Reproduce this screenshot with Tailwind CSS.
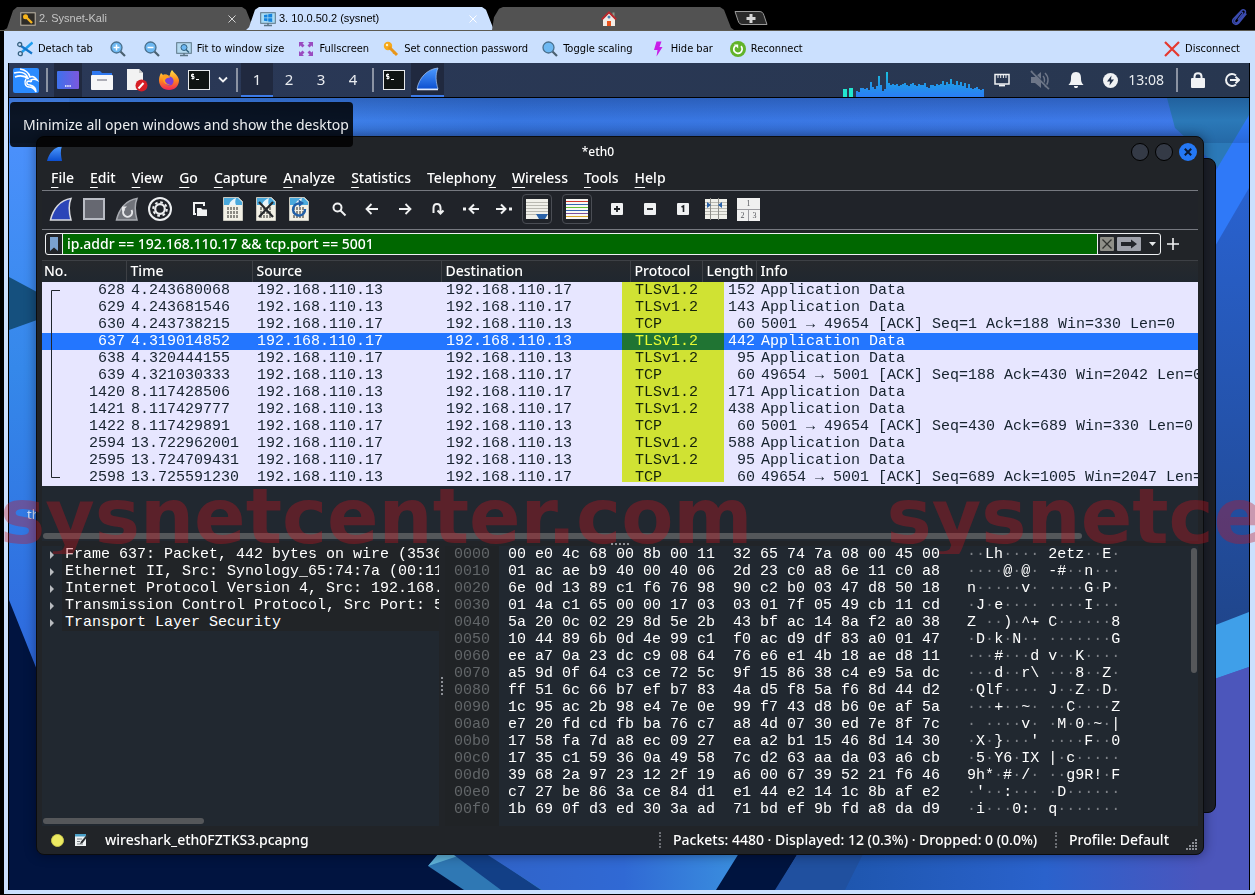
<!DOCTYPE html>
<html lang="en">
<head>
<meta charset="utf-8">
<meta name="viewport" content="width=device-width, initial-scale=1">
<title>3. 10.0.50.2 (sysnet)</title>
<script src="https://cdn.jsdelivr.net/npm/@tailwindcss/browser@4"></script>
</head>
<body class="relative h-screen overflow-hidden flex flex-col bg-black font-['Noto_Sans',sans-serif]">

<!-- shared symbols -->
<svg class="absolute size-0" aria-hidden="true">
  <defs>
    <linearGradient id="fin" x1="0" y1="0" x2="0" y2="1"><stop offset="0" stop-color="#4d9bff"/><stop offset="1" stop-color="#0c4fd0"/></linearGradient>
    <linearGradient id="wave" gradientUnits="userSpaceOnUse" x1="0" y1="8" x2="0" y2="34"><stop offset="0" stop-color="#18c5dc"/><stop offset=".5" stop-color="#2198e8"/><stop offset="1" stop-color="#2a7df5"/></linearGradient>
    <linearGradient id="fox" x1="0" y1="0" x2="0" y2="1"><stop offset="0" stop-color="#ffe04a"/><stop offset=".5" stop-color="#ff8a1c"/><stop offset="1" stop-color="#f0245a"/></linearGradient>
    <symbol id="terminal" viewBox="0 0 22 20"><rect x=".5" y=".5" width="21" height="19" fill="#101412" stroke="#e6e8ea"/><path d="M6 4.500H3.500v2H6v2H3.500M4.800 3.500v6M8 9.500h3" stroke="#fff" fill="none"/></symbol>
    <symbol id="page" viewBox="0 0 20 24"><path d="M.5.5h15l4 4v19H.5z" fill="#f3f1e6" stroke="#c9c8bf"/><path d="M1 1h14l4 4v3H1z" fill="#4aa9dc"/><path d="M6 8c1-4 4-6 7-7-1 3-1 5 0 7z" fill="#e8f4fa"/><path d="M4 11.500h12M4 15.500h12M4 19.500h12" stroke="#8c8b84" stroke-width="3" stroke-dasharray="2 1"/></symbol>
    <symbol id="lens" viewBox="0 0 16 16"><path d="M10.500 10.500l4.500 4.500" stroke="#4b6070" stroke-width="2.200"/><circle cx="6.500" cy="6.500" r="5.500" fill="#6db8f2" stroke="#4a6f8c" stroke-width="1.300"/></symbol>
  </defs>
</svg>

<!-- session tabs -->
<header class="h-[31px] shrink-0 flex items-end pl-1 border-b border-[#5c5a52] font-['Liberation_Sans',sans-serif] text-[11px]">
  <nav class="flex items-end flex-1" aria-label="Sessions">
    <button class="w-[250px] h-[23px] pl-4 pr-[18px] flex items-center bg-[#525252] text-[#c4c4c4] [clip-path:polygon(0_100%,3px_92%,9px_15%,13px_0,calc(100%_-_12px)_0,calc(100%_-_8px)_12%,100%_100%)]">
      <svg class="size-4" viewBox="0 0 16 16"><rect x=".8" y="1.800" width="14.400" height="12.400" fill="#2e2c28" stroke="#c0b8a8"/><circle cx="5.500" cy="5.800" r="2.500" fill="#f7b51c"/><path d="M6 6l6 6" stroke="#f7b51c" stroke-width="2.400"/></svg>
      <span class="ml-[3px]">2. Sysnet-Kali</span>
      <svg class="ml-auto size-2" viewBox="0 0 8 8"><path d="M.5.5l7 7m0-7l-7 7" stroke="#d5d5d5"/></svg>
    </button>
    <button class="-ml-2 w-[250px] h-[23px] pl-[14px] pr-[19px] flex items-center bg-[#cbe0fe] text-black [clip-path:polygon(0_100%,3px_88%,9px_12%,13px_0,calc(100%_-_14px)_0,calc(100%_-_10px)_12%,calc(100%_-_3px)_90%,100%_100%)]">
      <svg class="size-4" viewBox="0 0 16 16"><rect x=".7" y="1.700" width="14.600" height="10.600" fill="#a8dcf5" stroke="#5c7686"/><path d="M4 4l3.500-.6v3.100H4zM8.200 3.300l4-.6v3.800h-4zM4 7.200h3.500v3L4 9.700zM8.200 7.200h4V11l-4-.6z" fill="#1583dd"/><path d="M8 12v2M4 14.500h8" stroke="#5c7686" stroke-width="1.500"/></svg>
      <span class="ml-[3px]">3. 10.0.50.2 (sysnet)</span>
      <svg class="ml-auto size-2" viewBox="0 0 8 8"><path d="M.5.5l7 7m0-7l-7 7" stroke="#fff"/></svg>
    </button>
    <button aria-label="Home" class="-ml-1 w-[242px] h-[23px] pr-2 flex items-center justify-center bg-[#525252] [clip-path:polygon(0_100%,2px_45%,7px_8%,11px_0,calc(100%_-_14px)_0,calc(100%_-_10px)_12%,calc(100%_-_3px)_90%,100%_100%)]">
      <svg class="size-4" viewBox="0 0 16 16"><path d="M2 8h12v7H2z" fill="#f1ece6"/><path d="M11.500 1.500h2V6h-2z" fill="#8d9a8a"/><path d="M8 2L14 8v1H2V8z" fill="#f1ece6"/><path d="M.8 8.500L8 1.300l7.200 7.200" stroke="#b8292d" stroke-width="1.800" fill="none"/><circle cx="8" cy="6" r="1.500" fill="#4a86b4"/><path d="M6 10h4v5H6z" fill="#e8521c"/></svg>
    </button>
    <button aria-label="New tab" class="mb-1 w-[34px] h-4">
      <svg class="w-[34px] h-4" viewBox="0 0 34 16"><path d="M1 1.500h24c3 0 4 1 5 4l3 9H9c-3 0-4-1-5-4z" fill="#2b2b2b" stroke="#9b9b9b"/><path d="M17 4v9M12.500 8.500h9" stroke="#d8d8d8" stroke-width="3"/></svg>
    </button>
  </nav>
  <svg class="w-[18px] h-[18px] mr-[7px] mb-1" viewBox="0 0 16 16" fill="none" stroke="#3b4bb0" stroke-width="1.300"><path d="M13.500 4.500L7 12.500c-1.500 1.800-4-.2-2.600-2L9.500 4c.9-1 2.300 0 1.500 1.200L7 10.300M13.500 4.500c1-2-1.500-4-3.300-2.300L3 9.800c-2 3 1.600 6.500 4.600 3.700l7-8.500"/></svg>
</header>

<main class="flex-1 min-h-0 flex flex-col mb-px ml-1 bg-[#cbe0fe] rounded-br">
  <!-- session toolbar -->
  <div class="h-8 pt-1 shrink-0 flex items-center pl-[13px] pr-[15px] text-black text-[11px] font-['DejaVu_Sans_Condensed','DejaVu_Sans',sans-serif] font-stretch-condensed whitespace-nowrap">
    <button class="flex items-center gap-[5px]"><svg class="size-4" viewBox="0 0 16 16" fill="none"><path d="M15.500 1.500L5 11" stroke="#1f9ff0" stroke-width="2.400"/><path d="M4 5l11 7.500" stroke="#1675c9" stroke-width="2.200"/><circle cx="2.700" cy="3.500" r="2" stroke="#35607f" stroke-width="1.300"/><circle cx="3.300" cy="12.700" r="2" stroke="#35607f" stroke-width="1.300"/></svg>Detach tab</button>
    <button aria-label="Zoom in" class="ml-[17px]"><svg class="size-4" viewBox="0 0 16 16"><use href="#lens"/><path d="M6.500 3.500v6m-3-3h6" stroke="#fff" stroke-width="1.500"/></svg></button>
    <button aria-label="Zoom out" class="ml-[18px]"><svg class="size-4" viewBox="0 0 16 16"><use href="#lens"/><path d="M3.500 6.500h6" stroke="#fff" stroke-width="1.500"/></svg></button>
    <button class="ml-4 flex items-center gap-[5px]"><svg class="size-4" viewBox="0 0 16 16"><rect x=".7" y="1.700" width="14.600" height="10.600" fill="#b5daf0" stroke="#5c7686"/><path d="M4 14.500h8M8 12v2" stroke="#5c7686" stroke-width="1.500"/><circle cx="8" cy="6.500" r="3" fill="#6db8f2" stroke="#33617f"/><path d="M10 8.500l3 3" stroke="#33617f" stroke-width="1.500"/></svg>Fit to window size</button>
    <button class="ml-[14px] flex items-center gap-[5px]"><svg class="size-4" viewBox="0 0 16 16" fill="#9a4cc0"><path d="M1 1h5L4.500 2.500l2 2-2 2-2-2L1 6zM15 1v5l-1.500-1.500-2 2-2-2 2-2L10 1zM1 15v-5l1.500 1.500 2-2 2 2-2 2L6 15zM15 15h-5l1.500-1.500-2-2 2-2 2 2L15 10z"/></svg>Fullscreen</button>
    <button class="ml-[14px] flex items-center gap-[5px]"><svg class="size-4" viewBox="0 0 16 16"><circle cx="5" cy="5" r="4.200" fill="#f6a91b"/><circle cx="4" cy="4" r="1.200" fill="#fff0c8"/><path d="M6 6l8 8" stroke="#e8961a" stroke-width="3"/><path d="M10 12.500l2-2" stroke="#e8961a" stroke-width="1.500"/></svg>Set connection password</button>
    <button class="ml-[14px] flex items-center gap-[5px]"><svg class="size-4" viewBox="0 0 16 16"><use href="#lens"/></svg>Toggle scaling</button>
    <button class="ml-[17px] flex items-center gap-[5px]"><svg class="size-4" viewBox="0 0 16 16"><path d="M6.500.5h5L9.500 6h3l-6 9.500L7.500 9H4z" fill="#c81ee8"/></svg>Hide bar</button>
    <button class="ml-[17px] flex items-center gap-[5px]"><svg class="size-4" viewBox="0 0 16 16"><circle cx="8" cy="8" r="8" fill="#62b32a"/><path d="M11 5.200a4.200 4.200 0 1 1-5.500-.5" stroke="#fff" stroke-width="1.700" fill="none"/><path d="M4 3.500h4.200v4z" fill="#fff"/></svg>Reconnect</button>
    <button class="ml-auto flex items-center gap-[5px]"><svg class="size-4" viewBox="0 0 16 16"><path d="M1 1l14 14M15 1L1 15" stroke="#e5392f" stroke-width="2.200"/></svg>Disconnect</button>
  </div>

  <!-- remote desktop -->
  <section aria-label="Remote desktop" class="relative flex-1 min-h-0 ml-1 mr-[5px] mb-1 border-x border-black overflow-hidden bg-[#2a62cf]">
    <svg class="absolute inset-0 size-full" viewBox="9 63 1240 827" preserveAspectRatio="none" aria-hidden="true">
      <defs>
        <linearGradient id="leftsky" x1="0" y1="0" x2="0" y2="1"><stop offset="0" stop-color="#4f92ff"/><stop offset=".45" stop-color="#3588ea"/><stop offset="1" stop-color="#2d66dc"/></linearGradient>
        <linearGradient id="topsky" x1="0" y1="0" x2="1" y2="0"><stop offset="0" stop-color="#4a90f8"/><stop offset=".4" stop-color="#3776e0"/><stop offset="1" stop-color="#3f7aea"/></linearGradient>
        <linearGradient id="rightlow" x1="0" y1="0" x2="0" y2="1"><stop offset="0" stop-color="#2962d0"/><stop offset="1" stop-color="#1f4488"/></linearGradient>
        <linearGradient id="bottomblue" x1="0" y1="0" x2="1" y2="0"><stop offset="0" stop-color="#3063c8"/><stop offset=".55" stop-color="#3069d4"/><stop offset="1" stop-color="#3a8fdf"/></linearGradient>
        <linearGradient id="bottomright" x1="0" y1="0" x2="1" y2="0"><stop offset="0" stop-color="#1e56ae"/><stop offset=".5" stop-color="#2a62cc"/><stop offset=".9" stop-color="#4c55bd"/><stop offset="1" stop-color="#4c55bd"/></linearGradient>
        <linearGradient id="panelshade" x1="0" y1="0" x2="0" y2="1"><stop offset="0" stop-color="#0b2860" stop-opacity=".3"/><stop offset=".5" stop-color="#0b2860" stop-opacity="0"/><stop offset="1" stop-color="#0b2860" stop-opacity=".2"/></linearGradient>
      </defs>
      <path d="M9 63h1240v80H9z" fill="url(#topsky)"/>
      <path d="M9 98h60v600H9z" fill="url(#leftsky)"/>
      <path d="M9 277l28 15v28l-28 10z" fill="#15507e"/>
      <path d="M9 600l28 70v-10h600v230H9z" fill="#011440"/>
      <path d="M1167 98h82v20l-30 50-44-40z" fill="#2b79b8"/>
      <path d="M1249 115l-49 82v60h49z" fill="#2f79f8"/>
      <path d="M1249 188l-49 84v380h49z" fill="url(#rightlow)"/>
      <path d="M840 889l20-50h356V677l33-10v223H840z" fill="url(#bottomright)"/>
      <path d="M1200 631l49-19v55l-49 17z" fill="#3f9fe9"/>
      <path d="M1249 667l-49 17v206h49z" fill="#4c56bb"/>
      <path d="M428 866l12-14h60l46 38h-82z" fill="#2f78b4"/>
      <path d="M428 866l12-14h30z" fill="#5fb2d8"/>
      <path d="M450 852h35l56 38h-40z" fill="#123f86"/>
      <path d="M480 850l62 40h175l24-40z" fill="url(#bottomblue)"/>
      <path d="M741 850l-25 40h60l24-40z" fill="#00143f"/>
      <path d="M800 850l-25 40h70l20-40z" fill="#20509f"/>
      <path d="M9 98h1240v45H9z" fill="url(#panelshade)"/>
    </svg>
    <span class="absolute left-[18px] top-[442px] text-[13px] text-white/80">th</span>

    <!-- desktop panel -->
    <div class="relative h-[35px] flex items-center bg-gradient-to-r from-[#2a3857] to-[#283750] border-b border-black text-[#e9ecf0]">
      <button aria-label="Applications" class="w-[34px] h-full flex items-center justify-center"><svg class="size-7" viewBox="0 0 28 28"><rect x="1" y="2" width="26" height="25" rx="2" fill="#2a8bff"/><path d="M2 7c7-2 12 0 14 5-5-3-9-3-13-1 6-2 10-1 13 2M8 3c6 1 9 4 10 8 2-1 5 0 7 3-2-1-4-1-6 0 1 2 0 2-2 1-3 0-3 4 1 4 4 1 6 3 6 7-2-4-4-5-7-5-4 0-5-5-3-8" fill="none" stroke="#fff" stroke-width="1.500"/></svg></button>
      <i class="ml-[3px] w-0.5 h-6 bg-[#8b93a3]"></i>
      <button aria-label="Show desktop" class="ml-1.5 w-7 h-full flex items-center justify-center bg-[#20293f]"><svg class="w-[22px] h-[18px]" viewBox="0 0 22 18"><defs><linearGradient id="dk"><stop offset="0" stop-color="#3d71ec"/><stop offset="1" stop-color="#7c58dd"/></linearGradient></defs><rect width="22" height="18" rx="1" fill="url(#dk)"/><path d="M8 15h6" stroke="#fff" stroke-width="1.500" stroke-dasharray="1.500 .7"/></svg></button>
      <button aria-label="Files" class="ml-2 w-6 h-full flex items-center"><svg class="w-6 h-5" viewBox="0 0 24 20"><path d="M2 1h8l2 2h10v6H2z" fill="#2f78f0"/><rect x="1" y="5" width="22" height="15" rx="1" fill="#f6f6f8"/><path d="M7 10h10" stroke="#9b9ba6" stroke-width="1.600"/></svg></button>
      <button aria-label="Text editor" class="ml-3 w-[22px] h-full flex items-center"><svg class="w-[22px] h-6" viewBox="0 0 22 24"><path d="M1 1h12l4 4v17H1z" fill="#f2f2f2"/><path d="M13 1v4h4z" fill="#c9c9c9"/><circle cx="15.500" cy="17.500" r="6" fill="#d61f26"/><path d="M12.500 20.500l5-5.500" stroke="#fff" stroke-width="2"/></svg></button>
      <button aria-label="Firefox" class="ml-2.5 w-[22px] h-full flex items-center"><svg class="w-[22px] h-[22px]" viewBox="0 0 22 22"><path d="M14 1c2 3 6 5 7 10 0 6-4 10-10 10S1 17 1 11c0-3 1-5 2-7l2 2c3-1 5 0 6 1l1-1c0-2 1-4 2-5z" fill="url(#fox)"/><circle cx="11" cy="12" r="4.600" fill="#7a3fd4"/><path d="M5 6c3-1 6 0 7 3-3-1-4 1-5 2 0 3 3 5 6 4-5 3-10-3-8-9z" fill="#ff9f1e"/></svg></button>
      <button aria-label="Terminal" class="ml-2 w-[22px] h-full flex items-center"><svg class="w-[22px] h-5"><use href="#terminal"/></svg></button>
      <button aria-label="More terminals" class="ml-[7px] w-3 h-full flex items-center justify-center"><svg class="w-2.5 h-2" viewBox="0 0 10 8" fill="none" stroke="#f0f2f4" stroke-width="1.800"><path d="M1 1.500l4 4 4-4"/></svg></button>
      <i class="ml-[7px] w-0.5 h-6 bg-[#8b93a3]"></i>
      <div class="ml-[3px] flex h-full text-[15px]">
        <button class="w-8 border-b-2 border-[#3d7be8] bg-[#20293f]">1</button><button class="w-8 border-b-2 border-transparent">2</button><button class="w-8 border-b-2 border-transparent">3</button><button class="w-8 border-b-2 border-transparent">4</button>
      </div>
      <i class="ml-[3px] w-0.5 h-6 bg-[#8b93a3]"></i>
      <button aria-label="Terminal window" class="ml-[9px] w-[22px] h-full flex items-center"><svg class="w-[22px] h-5"><use href="#terminal"/></svg></button>
      <button aria-label="Wireshark window" class="ml-[6px] w-[33px] h-full flex items-center justify-center border-b-2 border-[#3d7be8] bg-[#20293f]"><svg class="size-6" viewBox="0 0 24 24"><path d="M1 22C3 11 11 2 22 1c-3 7-2 14 0 21z" fill="url(#fin)" stroke="#a9c8f5" stroke-width=".7"/><path d="M1 22.500h21" stroke="#dfeaff" stroke-width="1.500"/></svg></button>
      <div class="ml-auto h-full flex items-end"><i class="w-1 h-2 bg-[#22e6cf]"></i><i class="ml-0.5 w-1 h-[9px] bg-[#22e6cf]"></i><svg id="load" class="ml-[3px] w-32 h-[34px]" viewBox="0 0 128 34"></svg></div>
      <svg class="ml-[10px] size-4" viewBox="0 0 16 16" fill="none" stroke="#f0f2f4" stroke-width="1.500"><rect x="1" y="2.500" width="14" height="9.500"/><path d="M4 3v3m2.700-3v3m2.700-3v3M12 3v3" stroke-width="1"/><path d="M5 13.500h6" stroke-width="1.800"/></svg>
      <svg class="ml-5 size-5" viewBox="0 0 20 20" fill="#6d7688"><path d="M1 7h4l6-5v16l-6-5H1z"/><path d="M13 6c2 2 2 6 0 8m2-11c4 4 4 10 0 14" stroke="#6d7688" stroke-width="1.500" fill="none"/><path d="M1 1l18 18" stroke="#6d7688" stroke-width="2"/><path d="M3 1.500l17 17" stroke="#29384f" stroke-width="1"/></svg>
      <svg class="ml-[18px] size-4" viewBox="0 0 16 16" fill="#f0f2f4"><path d="M8 0c4 0 5 3 5 6 0 4 1 5 2.500 7H.5C2 11 3 10 3 6c0-3 1-6 5-6zM6 14h4c0 3-4 3-4 0z"/></svg>
      <svg class="ml-[19px] size-[15px]" viewBox="0 0 15 15"><circle cx="7.500" cy="7.500" r="7.500" fill="#f0f2f4"/><path d="M8.500 2.500L4 8.500h3L6.500 12.500 11 6.500H8z" fill="#26344d"/></svg>
      <time class="ml-[10px] text-sm">13:08</time>
      <i class="ml-3 w-0.5 h-6 bg-[#8b93a3]"></i>
      <svg class="ml-[13px] w-3.5 h-4" viewBox="0 0 14 16"><rect y="6" width="14" height="10" rx="1" fill="#f0f2f4"/><path d="M3.500 6.500V4.500c0-4.500 7-4.500 7 0v2" fill="none" stroke="#f0f2f4" stroke-width="2"/></svg>
      <svg class="ml-[19px] mr-[9px] size-4" viewBox="0 0 16 16" fill="none" stroke="#f0f2f4" stroke-width="2"><path d="M12 3.500A6 6 0 1 0 12 12.500M6 8h8M11.500 4.800L15 8l-3.500 3.200"/></svg>
    </div>

    <!-- window in the background -->
    <div class="absolute left-[60px] right-[33px] top-[95px] bottom-[77px] rounded-lg border border-[#07080a] bg-[#1d2027]"></div>

    <!-- Wireshark -->
    <article aria-label="*eth0" class="absolute left-[27px] right-[45px] top-[73px] bottom-[35px] rounded-lg border border-[#0b0c0e] bg-[#212428] shadow-[0_0_12px_rgba(0,0,20,0.45)] flex flex-col px-[5px] text-white text-sm">
      <header class="h-[29px] shrink-0 flex items-center relative font-medium text-xs">
        <svg class="ml-[5px] mt-1 w-4 h-4" viewBox="0 0 16 16"><path d="M0 15C2 7 7 1 15 0c-2 5-1 10 0 15z" fill="url(#fin)"/></svg>
        <h1 class="absolute inset-x-0 text-center pr-11">*eth0</h1>
        <div class="ml-auto flex gap-1.5 pr-px">
          <button aria-label="Minimize" class="size-[18px] rounded-full border border-black bg-[#343a46]"></button>
          <button aria-label="Maximize" class="size-[18px] rounded-full border border-black bg-[#343a46]"></button>
          <button aria-label="Close" class="size-[18px] rounded-full bg-[#2478f5] flex items-center justify-center"><svg class="size-2" viewBox="0 0 8 8"><path d="M.8.8l6.400 6.400m0-6.400L.8 7.200" stroke="#0b1a33" stroke-width="2"/></svg></button>
        </div>
      </header>
      <nav class="h-[25px] shrink-0 flex items-center gap-4 pl-[9px] border-b border-[#767980] font-medium">
        <button><u class="underline-offset-4">F</u>ile</button><button><u class="underline-offset-4">E</u>dit</button><button><u class="underline-offset-4">V</u>iew</button><button><u class="underline-offset-4">G</u>o</button><button><u class="underline-offset-4">C</u>apture</button><button><u class="underline-offset-4">A</u>nalyze</button><button><u class="underline-offset-4">S</u>tatistics</button><button>Telephon<u class="underline-offset-4">y</u></button><button><u class="underline-offset-4">W</u>ireless</button><button><u class="underline-offset-4">T</u>ools</button><button><u class="underline-offset-4">H</u>elp</button>
      </nav>
      <div role="toolbar" class="h-[39px] shrink-0 flex items-center gap-[7px] pl-0.5 pb-0.5 border-b border-[#767980] bg-[#202329]">
        <div class="flex">
          <button aria-label="Start capture" class="w-[33px] flex justify-center"><svg class="size-6" viewBox="0 0 24 24"><path d="M1.500 23C4 12 11 3 22 1.500c-3 7-2 14 0 21.500z" fill="#2a45b8" stroke="#d9dbe0" stroke-width="1.500"/></svg></button>
          <button aria-label="Stop capture" class="w-[33px] flex justify-center"><svg class="size-6" viewBox="0 0 24 24"><rect x="2" y="2" width="20" height="20" fill="#666871" stroke="#b9bcc4" stroke-width="2"/></svg></button>
          <button aria-label="Restart capture" class="w-[33px] flex justify-center"><svg class="size-6" viewBox="0 0 24 24"><path d="M1.500 23C4 12 11 3 22 1.500c-3 7-2 14 0 21.500z" fill="#70737a" stroke="#a7aab0" stroke-width="1.500"/><path d="M9.500 12a4.500 4.500 0 1 0 7 1" fill="none" stroke="#e6e7ea" stroke-width="2"/><path d="M7 14.500V9.500h5z" fill="#e6e7ea"/></svg></button>
          <button aria-label="Capture options" class="w-[33px] flex justify-center"><svg class="size-6" viewBox="0 0 24 24" fill="none" stroke="#eceef0"><circle cx="12" cy="12" r="11" stroke-width="2"/><circle cx="12" cy="12" r="4.800" stroke-width="2.200"/><circle cx="12" cy="12" r="6.800" stroke-width="2" stroke-dasharray="2.670 2.670"/></svg></button>
        </div>
        <div class="flex items-center">
          <button aria-label="Open" class="w-[33px] flex justify-center"><svg class="size-4" viewBox="0 0 16 16"><path d="M4 13H2V2h10v3" fill="none" stroke="#f0f1f2" stroke-width="2"/><path d="M5 7h4l1.500 1.500H15V15H5z" fill="#f0f1f2"/></svg></button>
          <button aria-label="Save" class="w-[33px] flex justify-center"><svg class="w-5 h-6"><use href="#page"/></svg></button>
          <button aria-label="Close file" class="w-[33px] flex justify-center"><svg class="w-5 h-6"><use href="#page"/><path d="M3 5l14 15M17 5L3 20" stroke="#26292c" stroke-width="2.200"/></svg></button>
          <button aria-label="Reload" class="w-[33px] flex justify-center"><svg class="w-5 h-6"><use href="#page"/><path d="M10 6.500A6 6 0 1 0 16 12" fill="none" stroke="#2160a8" stroke-width="2.400"/><path d="M9.500 2.500l5.500 3.500-5 4z" fill="#2160a8"/></svg></button>
        </div>
        <div class="flex items-center">
          <button aria-label="Find" class="w-[33px] flex justify-center"><svg class="size-4" viewBox="0 0 16 16" fill="none" stroke="#f0f1f2" stroke-width="2"><circle cx="6.500" cy="6.500" r="4"/><path d="M9.500 9.500l5 5"/></svg></button>
          <button aria-label="Back" class="w-[33px] flex justify-center"><svg class="size-4" viewBox="0 0 16 16" fill="none" stroke="#f0f1f2" stroke-width="1.800"><path d="M14 8H3M7.500 3L2.500 8l5 5"/></svg></button>
          <button aria-label="Forward" class="w-[33px] flex justify-center"><svg class="size-4" viewBox="0 0 16 16" fill="none" stroke="#f0f1f2" stroke-width="1.800"><path d="M2 8h11M8.500 3l5 5-5 5"/></svg></button>
          <button aria-label="Go to packet" class="w-[33px] flex justify-center"><svg class="size-4" viewBox="0 0 16 16" fill="none" stroke="#f0f1f2" stroke-width="2"><path d="M3.500 12V7c0-5.500 7-5.500 7 0v5M7.500 9.500l3 3 3-3"/></svg></button>
          <button aria-label="First packet" class="w-[33px] flex justify-center"><svg class="size-4" viewBox="0 0 16 16" fill="none" stroke="#f0f1f2" stroke-width="2"><path d="M16 8H7M11 3.500L6.500 8l4.500 4.500"/><path d="M0 8h3" stroke-width="3"/></svg></button>
          <button aria-label="Last packet" class="w-[33px] flex justify-center"><svg class="size-4" viewBox="0 0 16 16" fill="none" stroke="#f0f1f2" stroke-width="2"><path d="M0 8h9M5 3.500L9.500 8 5 12.500"/><path d="M13 8h3" stroke-width="3"/></svg></button>
          <button aria-label="Auto scroll" class="w-[33px] flex justify-center"><span class="size-[30px] rounded border border-[#4a4d54] flex items-center justify-center"><svg class="size-[22px]" viewBox="0 0 22 22"><path d="M0 1h22v20H0z" fill="#f0f0ea"/><path d="M0 4.500h22m-22 3h22m-22 3h22m-22 3h22m-22 3h22" stroke="#b9b9b2"/><path d="M10 16h12l-3 5h-6z" fill="#2a62a8"/></svg></span></button>
        </div>
        <div class="flex"><button aria-label="Colorize" class="w-[33px] flex justify-center"><span class="size-[30px] rounded border border-[#4a4d54] flex items-center justify-center"><svg class="size-[22px]" viewBox="0 0 22 22" stroke-width="1"><path d="M0 1h22v20H0z" fill="#f8f8f4"/><path d="M0 3.500h22" stroke="#d33a2c"/><path d="M0 6.500h22" stroke="#3566b0"/><path d="M0 9.500h22" stroke="#63c132"/><path d="M0 12.500h22" stroke="#3566b0"/><path d="M0 15.500h22" stroke="#7b4f9c"/><path d="M0 18.500h22" stroke="#d9a52a"/></svg></span></button></div>
        <div class="flex items-center">
          <button aria-label="Zoom in text" class="w-[33px] flex justify-center"><svg class="size-3" viewBox="0 0 12 12"><rect width="12" height="12" rx="1" fill="#f0f1f2"/><path d="M6 3v6M3 6h6" stroke="#1d2024" stroke-width="1.800"/></svg></button>
          <button aria-label="Zoom out text" class="w-[33px] flex justify-center"><svg class="size-3" viewBox="0 0 12 12"><rect width="12" height="12" rx="1" fill="#f0f1f2"/><path d="M3 6h6" stroke="#1d2024" stroke-width="1.800"/></svg></button>
          <button aria-label="Normal size" class="w-[33px] flex justify-center"><svg class="size-3" viewBox="0 0 12 12"><rect width="12" height="12" rx="1" fill="#f0f1f2"/><path d="M4.500 4l2-1v6" stroke="#1d2024" stroke-width="1.600" fill="none"/></svg></button>
          <button aria-label="Resize columns" class="w-[33px] flex justify-center"><svg class="size-[22px]" viewBox="0 0 22 22"><path d="M0 1h22v20H0z" fill="#f0f0ea"/><path d="M0 4.500h22m-22 3h22m-22 3h22m-22 3h22m-22 3h22" stroke="#b9b9b2"/><path d="M5.500 0v22M13.500 0v22" stroke="#8f8f8a"/><path d="M2 4l4 3-4 3zM17 4l-4 3 4 3z" fill="#2a62a8"/></svg></button>
          <button aria-label="Reset layout" class="w-[33px] flex justify-center"><span class="size-[23px] grid grid-cols-2 gap-px bg-[#9b9ba0] text-[#55575c] text-[8px] leading-[11px] text-center font-['Liberation_Serif',serif]"><b class="col-span-2 bg-[#f0f0f0] font-normal">1</b><b class="bg-[#f0f0f0] font-normal">2</b><b class="bg-[#f0f0f0] font-normal">3</b></span></button>
        </div>
      </div>

      <form class="h-[30px] shrink-0 flex items-center pl-[3px] pr-[19px] pb-0.5" onsubmit="return false">
        <div class="flex-1 h-[22px] flex border border-[#eef0f2] rounded-[3px] overflow-hidden">
          <button type="button" aria-label="Bookmarks" class="w-[17px] flex items-center justify-center border-r border-[#eef0f2]"><svg class="w-2 h-3.5" viewBox="0 0 8 14"><path d="M0 0h8v14l-4-3.500L0 14z" fill="#7aa2d0"/></svg></button>
          <input aria-label="Display filter" class="flex-1 min-w-0 px-1 bg-[#006700] text-white font-medium outline-none" value="ip.addr == 192.168.110.17 &amp;&amp; tcp.port == 5001">
          <div class="flex items-center border-l border-[#eef0f2] pl-0.5 pr-1">
            <button type="button" aria-label="Clear filter"><svg class="size-3.5" viewBox="0 0 14 14"><rect width="14" height="14" rx="1" fill="#8f8f88"/><path d="M2.500 2.500l9 9m0-9l-9 9" stroke="#2f302e" stroke-width="1.300"/></svg></button>
            <button type="button" aria-label="Apply filter" class="ml-[3px]"><svg class="w-6 h-3.5" viewBox="0 0 24 14"><rect width="24" height="14" rx="1" fill="#9fa2ab"/><path d="M4 5h10V2.500L20 7l-6 4.500V9H4z" fill="#23262b"/></svg></button>
            <button type="button" aria-label="Recent filters" class="ml-2"><svg class="w-[7px] h-1" viewBox="0 0 7 4"><path d="M0 0h7L3.500 4z" fill="#e6e8ea"/></svg></button>
          </div>
        </div>
        <button type="button" aria-label="Add filter button" class="ml-1.5"><svg class="size-3" viewBox="0 0 12 12"><path d="M6 0v12M0 6h12" stroke="#f0f1f2" stroke-width="1.600"/></svg></button>
      </form>

      <!-- packet list -->
      <section aria-label="Packets" class="relative h-[281px] shrink-0 bg-[#212830] overflow-hidden">
        <table class="w-full table-fixed border-collapse whitespace-nowrap">
          <colgroup><col class="w-[84px]"><col class="w-[126px]"><col class="w-[189px]"><col class="w-[189px]"><col class="w-[72px]"><col class="w-[54px]"><col></colgroup>
          <thead class="text-left">
            <tr class="h-[21px] bg-gradient-to-b from-[#26292d] to-[#20272f] leading-[20px]">
              <th class="p-0 pl-0.5 font-medium border-t border-[#3d4045]">No.</th><th class="p-0 pl-1 font-medium border-t border-l border-[#3d4045]">Time</th><th class="p-0 pl-1 font-medium border-t border-l border-[#3d4045]">Source</th><th class="p-0 pl-1 font-medium border-t border-l border-[#3d4045]">Destination</th><th class="p-0 pl-1 font-medium border-t border-l border-[#3d4045]">Protocol</th><th class="p-0 pl-1 font-medium border-t border-l border-[#3d4045]">Length</th><th class="p-0 pl-1 font-medium border-t border-l border-[#3d4045]">Info</th>
            </tr>
          </thead>
          <tbody id="packets" class="font-['Liberation_Mono',monospace] text-[15px] leading-[17px] text-[#16222e] bg-[#e7e6ff]"></tbody>
        </table>
        <svg class="absolute left-[9px] top-[30px] w-[9px] h-[188px]" viewBox="0 0 9 188" fill="none" stroke="#20262c"><path d="M9 .5H.5v187H9"/></svg>
        <div class="absolute left-[580px] top-[22px] w-[102px] h-[200px] bg-[#e6fb33] mix-blend-multiply"></div>
        <div class="absolute left-px right-[116px] bottom-0.5 h-1.5 rounded-full bg-[#54575a]"></div>
      </section>
      <div class="h-[5px] shrink-0 flex items-center justify-center"><i class="w-[18px] h-0 border-t-2 border-dotted border-[#8d9096]"></i></div>

      <!-- details and bytes -->
      <div class="flex-1 min-h-0 flex font-['Liberation_Mono',monospace] text-[15px] leading-[17px]">
        <section aria-label="Packet details" class="relative w-[397px] shrink-0 overflow-hidden bg-[#212830] whitespace-nowrap">
          <ul id="tree"></ul>
          <div class="absolute left-px bottom-0.5 w-[161px] h-1.5 rounded-full bg-[#55575a]"></div>
        </section>
        <div class="w-1.5 flex items-center justify-center"><i class="h-[18px] w-0 border-l-2 border-dotted border-[#8d9096]"></i></div>
        <section aria-label="Packet bytes" class="flex-1 min-w-0 flex relative bg-[#212830] overflow-hidden">
          <pre id="offsets" class="w-[54px] pl-[9px] bg-[#202326] text-[#626669] font-['Liberation_Mono',monospace]"></pre>
          <pre id="hex" class="ml-[9px] font-['Liberation_Mono',monospace]"></pre>
          <pre id="ascii" class="ml-[27px] font-['Liberation_Mono',monospace]"></pre>
          <div class="absolute right-px top-0.5 w-1.5 h-[125px] rounded-full bg-[#55575a]"></div>
        </section>
      </div>

      <footer class="h-7 shrink-0 flex items-center font-medium pl-[9px] whitespace-nowrap">
        <svg class="size-[13px]" viewBox="0 0 13 13"><circle cx="6.500" cy="6.500" r="6" fill="#ecea62" stroke="#c9c84e"/></svg>
        <svg class="ml-[10px] size-[14px]" viewBox="0 0 14 14"><path d="M1 1h11v12H1z" fill="#eef2f3"/><path d="M1 1h11v2.500H1z" fill="#4aa0c8"/><path d="M3 6h5M3 8.500h3M3 11h6" stroke="#7a8084"/><path d="M13.500 1L7 8.500 6 11l2.500-1L14 3z" fill="#2a2d30"/></svg>
        <span class="ml-[17px]">wireshark_eth0FZTKS3.pcapng</span>
        <i class="ml-auto h-4 border-l-2 border-dotted border-[#6c6f74]"></i>
        <span class="ml-3 min-w-[375px]">Packets: 4480 · Displayed: 12 (0.3%) · Dropped: 0 (0.0%)</span>
        <i class="ml-[7px] h-4 border-l-2 border-dotted border-[#6c6f74]"></i>
        <span class="ml-3">Profile: Default</span>
        <svg class="ml-[17px] mt-2.5 size-3" viewBox="0 0 12 12" fill="#8d9096"><path d="M9 0h2v2H9zM6 3h2v2H6zM9 3h2v2H9zM3 6h2v2H3zM6 6h2v2H6zM9 6h2v2H9zM0 9h2v2H0zM3 9h2v2H3zM6 9h2v2H6zM9 9h2v2H9z"/></svg>
      </footer>
    </article>

    <div role="tooltip" class="absolute left-px top-[39px] pl-[13px] pr-1 h-[45px] flex items-center rounded bg-black/85 text-[#eceef0] text-sm whitespace-nowrap">Minimize all open windows and show the desktop</div>
  </section>
</main>

<!-- watermark -->
<div aria-hidden="true" class="pointer-events-none absolute inset-x-0 top-[484px] h-[70px] overflow-hidden whitespace-nowrap flex gap-[134px] text-[76px] leading-[66px] font-bold font-['DejaVu_Sans',sans-serif] text-[#c81420]/35"><span>sysnetcenter.com</span><span>sysnetcenter.com</span></div>

<script>
const packets = [
  [628, '4.243680068', '192.168.110.13', '192.168.110.17', 'TLSv1.2', 152, 'Application Data'],
  [629, '4.243681546', '192.168.110.13', '192.168.110.17', 'TLSv1.2', 143, 'Application Data'],
  [630, '4.243738215', '192.168.110.17', '192.168.110.13', 'TCP', 60, '5001 → 49654 [ACK] Seq=1 Ack=188 Win=330 Len=0'],
  [637, '4.319014852', '192.168.110.17', '192.168.110.13', 'TLSv1.2', 442, 'Application Data'],
  [638, '4.320444155', '192.168.110.17', '192.168.110.13', 'TLSv1.2', 95, 'Application Data'],
  [639, '4.321030333', '192.168.110.13', '192.168.110.17', 'TCP', 60, '49654 → 5001 [ACK] Seq=188 Ack=430 Win=2042 Len=0'],
  [1420, '8.117428506', '192.168.110.13', '192.168.110.17', 'TLSv1.2', 171, 'Application Data'],
  [1421, '8.117429777', '192.168.110.13', '192.168.110.17', 'TLSv1.2', 438, 'Application Data'],
  [1422, '8.117429891', '192.168.110.17', '192.168.110.13', 'TCP', 60, '5001 → 49654 [ACK] Seq=430 Ack=689 Win=330 Len=0'],
  [2594, '13.722962001', '192.168.110.17', '192.168.110.13', 'TLSv1.2', 588, 'Application Data'],
  [2595, '13.724709431', '192.168.110.17', '192.168.110.13', 'TLSv1.2', 95, 'Application Data'],
  [2598, '13.725591230', '192.168.110.13', '192.168.110.17', 'TCP', 60, '49654 → 5001 [ACK] Seq=689 Ack=1005 Win=2047 Len=0']
];
document.getElementById('packets').innerHTML = packets.map(p =>
  `<tr class="h-[17px] ${p[0] === 637 ? 'bg-[#2376ff] text-white' : ''}">` + p.map((v, i) =>
    `<td class="p-0 overflow-hidden ${i === 0 || i === 5 ? 'text-right pr-px' : 'pl-[5px]'}">${v}</td>`).join('') + '</tr>').join('');

const tree = ['Frame 637: Packet, 442 bytes on wire (3536 bits)', 'Ethernet II, Src: Synology_65:74:7a (00:11:32:65:74:7a)', 'Internet Protocol Version 4, Src: 192.168.110.17', 'Transmission Control Protocol, Src Port: 5001', 'Transport Layer Security'];
document.getElementById('tree').innerHTML = tree.map(t =>
  `<li class="flex h-[17px] bg-[#212830]"><button class="flex items-center w-full"><svg class="ml-2 w-1 h-2 shrink-0" viewBox="0 0 4 8"><path d="M0 0l4 4-4 4z" fill="#b9bcc0"/></svg><span class="ml-2 pl-[3px] flex-1 text-left bg-[#212427]">${t}</span></button></li>`).join('');

const bytes = `00 e0 4c 68 00 8b 00 11 32 65 74 7a 08 00 45 00
01 ac ae b9 40 00 40 06 2d 23 c0 a8 6e 11 c0 a8
6e 0d 13 89 c1 f6 76 98 90 c2 b0 03 47 d8 50 18
01 4a c1 65 00 00 17 03 03 01 7f 05 49 cb 11 cd
5a 20 0c 02 29 8d 5e 2b 43 bf ac 14 8a f2 a0 38
10 44 89 6b 0d 4e 99 c1 f0 ac d9 df 83 a0 01 47
ee a7 0a 23 dc c9 08 64 76 e6 e1 4b 18 ae d8 11
a5 9d 0f 64 c3 ce 72 5c 9f 15 86 38 c4 e9 5a dc
ff 51 6c 66 b7 ef b7 83 4a d5 f8 5a f6 8d 44 d2
1c 95 ac 2b 98 e4 7e 0e 99 f7 43 d8 b6 0e af 5a
e7 20 fd cd fb ba 76 c7 a8 4d 07 30 ed 7e 8f 7c
17 58 fa 7d a8 ec 09 27 ea a2 b1 15 46 8d 14 30
17 35 c1 59 36 0a 49 58 7c d2 63 aa da 03 a6 cb
39 68 2a 97 23 12 2f 19 a6 00 67 39 52 21 f6 46
c7 27 be 86 3a ce 84 d1 e1 44 e2 14 1c 8b af e2
1b 69 0f d3 ed 30 3a ad 71 bd ef 9b fd a8 da d9`.split('\n').map(r => r.split(' '));
const glyph = b => {
  const c = parseInt(b, 16);
  return c >= 32 && c < 127 ? String.fromCharCode(c) : '<span class="text-[#7d8187]">·</span>';
};
document.getElementById('offsets').textContent = bytes.map((r, i) => (i * 16).toString(16).padStart(4, '0')).join('\n');
document.getElementById('hex').textContent = bytes.map(r => r.slice(0, 8).join(' ') + '  ' + r.slice(8).join(' ')).join('\n');
document.getElementById('ascii').innerHTML = bytes.map(r => r.slice(0, 8).map(glyph).join('') + ' ' + r.slice(8).map(glyph).join('')).join('\n');

const load = [6,5,9,9,8,9,7,15,10,8,11,21,12,6,8,25,14,12,13,12,13,11,12,13,14,12,11,13,14,12,11,13,12,12,14,10,9,12,12,11,13,12,13,16,12,15,13,18,13,12,16,12,15,11,14,9,13,9,8,9,10,8,7,8];
document.getElementById('load').innerHTML = '<path fill="url(#wave)" d="' + load.map((h, i) => `M${i * 2} 34v-${h}h2v${h}z`).join('') + '"/>';
</script>
</body>
</html>
